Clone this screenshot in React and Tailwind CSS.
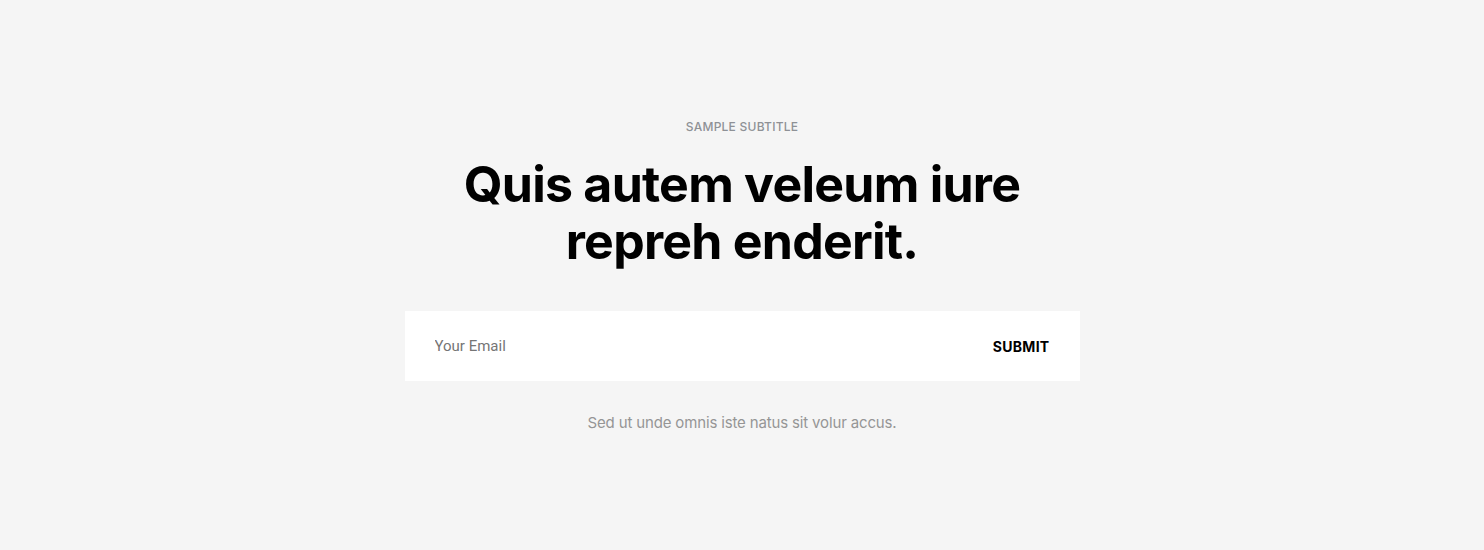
import React from 'react';

const App = () => {
  return (
    <div className="min-h-[550px] w-full bg-[#f5f5f5] flex flex-col items-center font-['Inter',sans-serif] pt-[119px]">
      <p className="text-[12px] leading-[16px] uppercase font-medium tracking-[0.02em] text-[#8e9196]">Sample Subtitle</p>
      <h2 className="mt-[21px] text-center text-[50px] leading-[57px] font-bold tracking-[-0.015em] text-black">
        Quis autem veleum iure
        <br />
        repreh enderit.
      </h2>
      <form className="mt-[41px] w-[675px] h-[70px] bg-white flex items-center justify-between px-[30px]">
        <input
          type="email"
          placeholder="Your Email"
          className="flex-1 bg-transparent outline-none font-['Roboto',sans-serif] text-[15px] text-black placeholder:text-[#757575]"
        />
        <button type="button" className="text-[14px] font-bold uppercase text-black tracking-[0.02em]">
          Submit
        </button>
      </form>
      <p className="mt-[32px] text-[15px] leading-[20px] tracking-[-0.01em] text-[#959595]">Sed ut unde omnis iste natus sit volur accus.</p>
    </div>
  );
};

export default App;
